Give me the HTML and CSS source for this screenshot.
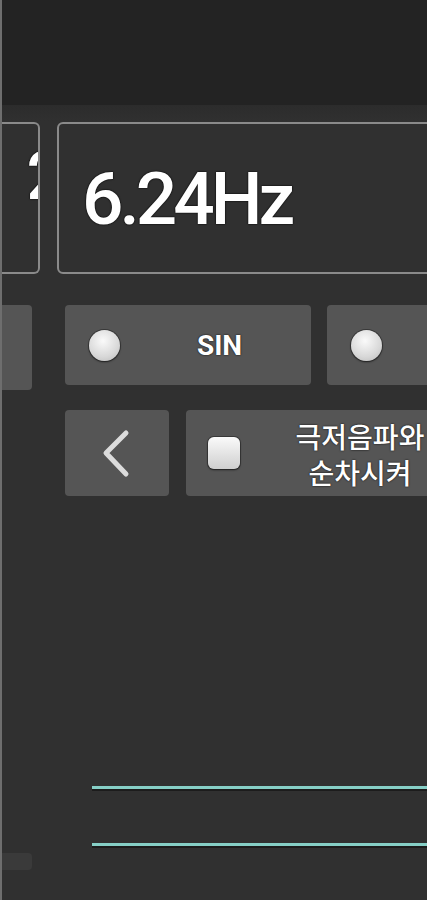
FILE: index.html
```html
<!DOCTYPE html>
<html lang="ko">
<head>
    <meta charset="UTF-8">
    <meta name="viewport" content="width=device-width, initial-scale=1.0">
    <title>주파수 발생기</title>
    <link rel="stylesheet" href="styles.css">
</head>
<body>

    <div class="titlebar"></div>

    <div class="panel">
        <div class="side">
            <div class="readout readout-prev">
                <span class="value">2</span>
            </div>
            <div class="side-button"></div>
            <div class="side-bar"></div>
        </div>

        <div class="main">
            <div class="readout">
                <span class="value">6.24Hz</span>
            </div>

            <div class="row wave-row">
                <button class="btn radio-btn">
                    <span class="radio"></span>
                    <span class="label">SIN</span>
                </button>
                <button class="btn radio-btn">
                    <span class="radio"></span>
                </button>
            </div>

            <div class="row option-row">
                <button class="btn back-btn">
                    <svg width="30" height="50" viewBox="0 0 30 50">
                        <polyline points="24,5 4,25 24,46" fill="none" stroke="#dcdcdc" stroke-width="5" stroke-linecap="round" stroke-linejoin="round"/>
                    </svg>
                </button>
                <button class="btn check-btn">
                    <span class="checkbox"></span>
                    <span class="label">극저음파와<br>순차시켜</span>
                </button>
            </div>

            <div class="meter">
                <div class="meter-line"></div>
                <div class="meter-line"></div>
            </div>
        </div>
    </div>

</body>
</html>
```

FILE: styles.css
```css
:root {
    --bar-color: #232323;
    --background-color: #303030;
    --button-color: #555555;
    --border-color: #8a8a8a;
    --text-color: #ffffff;
    --teal: #86cfc6;
}

body {
    margin: 0;
    height: 900px;
    overflow: hidden;
    background-color: var(--background-color);
    border-left: 2px solid #6e6e6e;
    font-family: Roboto, "Noto Sans CJK KR", sans-serif;
    color: var(--text-color);
}

.titlebar {
    height: 105px;
    background-color: var(--bar-color);
}

.panel {
    display: grid;
    grid-template-columns: 38px 480px;
    column-gap: 17px;
    padding-top: 17px;
    background: linear-gradient(#2c2c2c, var(--background-color) 16px);
}

.readout {
    box-sizing: border-box;
    height: 152px;
    border: 2px solid var(--border-color);
    border-radius: 6px;
    display: flex;
    align-items: center;
    padding-left: 23px;
    overflow: hidden;
}

.readout .value {
    font-size: 73px;
    font-weight: 500;
    letter-spacing: -4px;
    text-shadow: 0 0 2px #000, 0 0 1px #000;
    margin-top: 2px;
}

.readout-prev {
    border-left: none;
    border-radius: 0 6px 6px 0;
    justify-content: flex-end;
    padding-left: 0;
}

.readout-prev .value {
    font-size: 66px;
    margin-right: -22px;
    margin-top: -44px;
}

.side-button {
    width: 30px;
    height: 85px;
    margin-top: 31px;
    background-color: var(--button-color);
    border-radius: 0 4px 4px 0;
}

.side-bar {
    width: 30px;
    height: 17px;
    margin-top: 463px;
    background-color: #3a3a3a;
    border-radius: 0 4px 4px 0;
}

.row {
    display: flex;
    padding-left: 8px;
}

.btn {
    display: flex;
    align-items: center;
    border: none;
    padding: 0;
    background-color: var(--button-color);
    border-radius: 4px;
    color: var(--text-color);
    font-family: inherit;
    flex-shrink: 0;
}

.wave-row {
    margin-top: 31px;
    gap: 16px;
}

.radio-btn {
    width: 246px;
    height: 80px;
    padding-left: 24px;
}

.radio {
    width: 31px;
    height: 31px;
    border-radius: 50%;
    background: radial-gradient(circle at 45% 35%, #fafafa, #d8d8d8 60%, #b8b8b8);
    box-shadow: 0 1px 2px #222, 0 0 0 1px #3a3a3a;
    flex-shrink: 0;
}

.radio-btn .label {
    flex: 1;
    text-align: center;
    font-size: 28px;
    font-weight: 700;
    text-shadow: 0 0 2px #000;
    margin-left: 8px;
}

.option-row {
    margin-top: 25px;
    gap: 17px;
}

.back-btn {
    width: 104px;
    height: 86px;
    justify-content: center;
}

.check-btn {
    width: 294px;
    height: 86px;
    padding-left: 22px;
}

.checkbox {
    width: 32px;
    height: 32px;
    border-radius: 6px;
    background: linear-gradient(#fafafa, #cfcfcf);
    box-shadow: 0 1px 2px #222, 0 0 0 1px #3a3a3a;
    flex-shrink: 0;
}

.check-btn .label {
    flex: 1;
    text-align: center;
    font-family: "Noto Sans CJK KR", sans-serif;
    font-size: 28px;
    font-weight: 500;
    line-height: 36px;
    text-shadow: 0 0 2px #000;
    margin-top: 2px;
}

.meter {
    margin-top: 290px;
    padding-left: 35px;
}

.meter-line {
    height: 3px;
    background-color: var(--teal);
    border-bottom: 2px solid #1c1c1c;
    margin-bottom: 52px;
}
```
